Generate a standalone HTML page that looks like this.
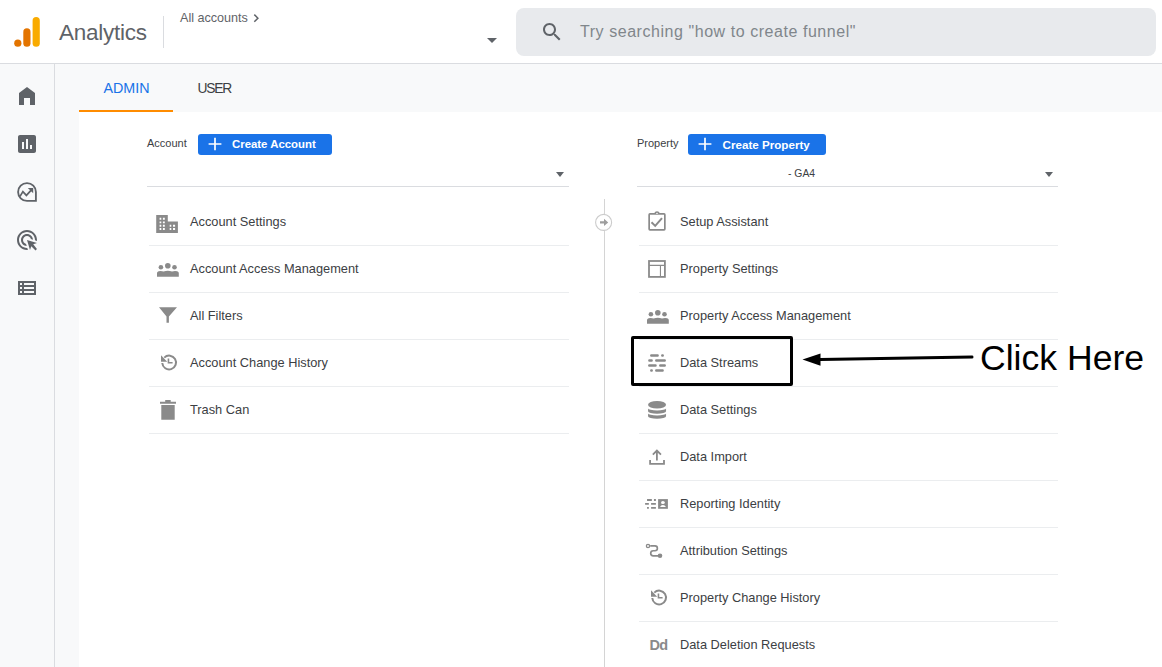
<!DOCTYPE html>
<html><head><meta charset="utf-8">
<style>
html,body{margin:0;padding:0;width:1162px;height:667px;overflow:hidden;background:#fff;font-family:"Liberation Sans",sans-serif;}
.a{position:absolute;}
.t{position:absolute;white-space:nowrap;line-height:1;}
#header{position:absolute;left:0;top:0;width:1162px;height:63px;background:#fff;border-bottom:1px solid #dadce0;}
#side{position:absolute;left:0;top:64px;width:54px;height:603px;background:#f8f9fa;border-right:1px solid #dadce0;}
#main{position:absolute;left:55px;top:64px;width:1107px;height:603px;background:#f8f9fa;}
#content{position:absolute;left:79px;top:112px;width:1083px;height:555px;background:#fff;}
.ico{position:absolute;width:24px;height:24px;}
.gl{fill:#5f6368;}
.li{position:absolute;height:1px;background:#ebedef;}
.txt{position:absolute;white-space:nowrap;line-height:1;font-size:12.8px;color:#3c4043;}
.btn{position:absolute;height:21px;background:#1a73e8;border-radius:3px;}
.btxt{position:absolute;white-space:nowrap;line-height:1;font-size:11.4px;font-weight:700;color:#fff;}
.lab{position:absolute;white-space:nowrap;line-height:1;font-size:11px;color:#3c4043;}
.gi{fill:#8c8c8c;}
</style></head>
<body>
<div id="header">
  <!-- logo -->
  <svg class="a" style="left:0;top:0" width="50" height="60" viewBox="0 0 50 60">
    <circle cx="17.8" cy="43.2" r="3.6" fill="#e37400"/>
    <rect x="23.3" y="28.3" width="7.2" height="18.5" rx="3.6" fill="#e37400"/>
    <rect x="32.6" y="17.1" width="7.2" height="29.7" rx="3.6" fill="#f9ab00"/>
  </svg>
  <div class="t" style="left:59px;top:21.5px;font-size:22.5px;letter-spacing:-0.25px;color:#5f6368;">Analytics</div>
  <div class="a" style="left:163px;top:16px;width:1px;height:32px;background:#dadce0;"></div>
  <div class="t" style="left:180px;top:12px;font-size:12.6px;color:#5f6368;">All accounts</div>
  <svg class="a" style="left:250px;top:10px" width="12" height="14" viewBox="0 0 12 14"><path d="M4.3 4.6 L7.9 8.2 L4.3 11.8" stroke="#5f6368" stroke-width="1.5" fill="none"/></svg>
  <svg class="a" style="left:487px;top:38px" width="10" height="5" viewBox="0 0 10 5"><path d="M0 0H10L5 5z" fill="#5f6368"/></svg>
  <div class="a" style="left:516px;top:8px;width:640px;height:48px;background:#e8eaed;border-radius:8px;"></div>
  <svg class="ico" style="left:540px;top:20px" viewBox="0 0 24 24"><path class="gl" d="M15.5 14h-.79l-.28-.27C15.41 12.59 16 11.11 16 9.5 16 5.91 13.09 3 9.5 3S3 5.91 3 9.5 5.91 16 9.5 16c1.61 0 3.09-.59 4.23-1.57l.27.28v.79l5 4.99L20.49 19l-4.99-5zm-6 0C7.01 14 5 11.99 5 9.5S7.01 5 9.5 5 14 7.01 14 9.5 11.99 14 9.5 14z"/></svg>
  <div class="t" style="left:580px;top:24px;font-size:16px;letter-spacing:0.55px;color:#80868b;">Try searching "how to create funnel"</div>
</div>

<div id="side">
  <svg class="ico" style="left:15px;top:20px" viewBox="0 0 24 24"><path class="gl" d="M12 3L4 9v12h5v-7h6v7h5V9z"/></svg>
  <svg class="ico" style="left:15px;top:68px" viewBox="0 0 24 24"><path class="gl" d="M19 3H5c-1.1 0-2 .9-2 2v14c0 1.1.9 2 2 2h14c1.1 0 2-.9 2-2V5c0-1.1-.9-2-2-2zM9 17H7v-7h2v7zm4 0h-2V7h2v10zm4 0h-2v-4h2v4z"/></svg>
  <svg class="ico" style="left:15px;top:116px" viewBox="0 0 24 24"><path d="M12 3.1A8.9 8.9 0 1 0 12 20.9H20.9V12A8.9 8.9 0 0 0 12 3.1z" fill="none" stroke="#5f6368" stroke-width="1.85"/><path d="M5 16.4L7.9 11.6L11.4 15.4L16.2 10.2" fill="none" stroke="#5f6368" stroke-width="1.7" stroke-linejoin="miter"/><path class="gl" d="M12.8 8H18.2V13.2z"/></svg>
  <svg class="ico" style="left:15px;top:164px" viewBox="0 0 24 24"><path class="gl" d="M11.71,17.99C8.53,17.84,6,15.22,6,12c0-3.31,2.69-6,6-6c3.22,0,5.84,2.53,5.99,5.71l-2.1-0.63C15.48,9.31,13.89,8,12,8c-2.21,0-4,1.790-4,4c0,1.89,1.31,3.48,3.08,3.89L11.71,17.99z M22,12c0,0.3-0.01,0.6-0.04,0.9l-1.970-0.59C20,12.21,20,12.1,20,12c0-4.42-3.58-8-8-8s-8,3.58-8,8s3.58,8,8,8c0.1,0,0.21,0,0.31-0.01l0.59,1.97C12.6,21.99,12.3,22,12,22C6.48,22,2,17.52,2,12C2,6.48,6.48,2,12,2S22,6.48,22,12z M18.23,16.26L22,15l-10-3l3,10l1.26-3.77l4.27,4.27l1.41-1.41L18.23,16.26z"/></svg>
  <svg class="ico" style="left:15px;top:212px" viewBox="0 0 24 24"><path class="gl" fill-rule="evenodd" d="M3 5h18v14H3z M5 7h2v2H5z M9 7h10v2H9z M5 11h2v2H5z M9 11h10v2H9z M5 15h2v2H5z M9 15h10v2H9z"/></svg>
</div>

<div id="main">
  <div class="t" style="left:48.5px;top:17px;font-size:14.3px;color:#1a73e8;">ADMIN</div>
  <div class="t" style="left:142.5px;top:18px;font-size:13.8px;letter-spacing:-1.2px;color:#3c4043;">USER</div>
  <div class="a" style="left:24px;top:46px;width:94px;height:2px;background:#ff8c00;"></div>
</div>
<div id="content"></div>
<div id="acc">
  <div class="lab" style="left:147px;top:138px;">Account</div>
  <div class="btn" style="left:198px;top:134px;width:134px;"></div>
  <svg class="a" style="left:208px;top:137px" width="14" height="14" viewBox="0 0 14 14"><path d="M7 0.8V13.2M0.6 7H13.4" stroke="#fff" stroke-width="1.7"/></svg>
  <div class="btxt" style="left:232px;top:139px;">Create Account</div>
  <svg class="a" style="left:556px;top:172px" width="8" height="5" viewBox="0 0 8 5"><path d="M0 0H8L4 5z" fill="#5f6368"/></svg>
  <div class="li" style="left:147px;top:186px;width:422px;background:#dadce0;"></div>
  <div class="li" style="left:149px;top:245px;width:420px;"></div>
  <div class="li" style="left:149px;top:292px;width:420px;"></div>
  <div class="li" style="left:149px;top:339px;width:420px;"></div>
  <div class="li" style="left:149px;top:386px;width:420px;"></div>
  <div class="li" style="left:149px;top:433px;width:420px;"></div>
  <div class="txt" style="left:190px;top:216px;">Account Settings</div>
  <div class="txt" style="left:190px;top:263px;">Account Access Management</div>
  <div class="txt" style="left:190px;top:310px;">All Filters</div>
  <div class="txt" style="left:190px;top:357px;">Account Change History</div>
  <div class="txt" style="left:190px;top:404px;">Trash Can</div>
</div>
<div id="prop">
  <div class="lab" style="left:637px;top:138px;">Property</div>
  <div class="btn" style="left:688px;top:134px;width:138px;"></div>
  <svg class="a" style="left:698px;top:137px" width="14" height="14" viewBox="0 0 14 14"><path d="M7 0.8V13.2M0.6 7H13.4" stroke="#fff" stroke-width="1.7"/></svg>
  <div class="btxt" style="left:722.5px;top:139px;font-size:11.65px;">Create Property</div>
  <div class="lab" style="left:788px;top:169px;font-size:10.4px;">- GA4</div>
  <svg class="a" style="left:1045px;top:172px" width="8" height="5" viewBox="0 0 8 5"><path d="M0 0H8L4 5z" fill="#5f6368"/></svg>
  <div class="li" style="left:637px;top:186px;width:421px;background:#dadce0;"></div>
  <div class="a" style="left:604px;top:199px;width:1px;height:468px;background:#d4d4d4;"></div>
  <div class="li" style="left:639px;top:245px;width:419px;"></div>
  <div class="li" style="left:639px;top:292px;width:419px;"></div>
  <div class="li" style="left:639px;top:339px;width:419px;"></div>
  <div class="li" style="left:639px;top:386px;width:419px;"></div>
  <div class="li" style="left:639px;top:433px;width:419px;"></div>
  <div class="li" style="left:639px;top:480px;width:419px;"></div>
  <div class="li" style="left:639px;top:527px;width:419px;"></div>
  <div class="li" style="left:639px;top:574px;width:419px;"></div>
  <div class="li" style="left:639px;top:621px;width:419px;"></div>
  <div class="txt" style="left:680px;top:216px;">Setup Assistant</div>
  <div class="txt" style="left:680px;top:263px;">Property Settings</div>
  <div class="txt" style="left:680px;top:310px;">Property Access Management</div>
  <div class="txt" style="left:680px;top:357px;">Data Streams</div>
  <div class="txt" style="left:680px;top:404px;">Data Settings</div>
  <div class="txt" style="left:680px;top:451px;">Data Import</div>
  <div class="txt" style="left:680px;top:498px;">Reporting Identity</div>
  <div class="txt" style="left:680px;top:545px;">Attribution Settings</div>
  <div class="txt" style="left:680px;top:592px;">Property Change History</div>
  <div class="txt" style="left:680px;top:639px;">Data Deletion Requests</div>
</div>
<svg class="a" style="left:0;top:0" width="1162" height="667" viewBox="0 0 1162 667">
  <circle cx="603.6" cy="222.4" r="8" fill="#fff" stroke="#cccccc" stroke-width="1.1"/>
  <path d="M600 221.3H604V218.8L608.2 222.4L604 226V223.6H600z" fill="#9e9e9e"/>
  <g fill="#8a8a8a">
    <!-- building -->
    <path fill-rule="evenodd" d="M156.2 215.1H167.8V221.6H177.9V232.9H156.2z M159.6 217.8h1.7v2h-1.7z M162.9 217.8h1.9v2h-1.9z M159.6 221.4h1.7v1.9h-1.7z M162.9 221.4h1.9v1.9h-1.9z M159.6 224.8h1.7v1.9h-1.7z M162.9 224.8h1.9v1.9h-1.9z M159.6 228.1h1.7v1.9h-1.7z M162.9 228.1h1.9v1.9h-1.9z M169.7 224.8h1.6v1.9h-1.6z M173 224.8h2.1v1.9h-2.1z M169.7 228.1h1.6v1.9h-1.6z M173 228.1h2.1v1.9h-2.1z"/>
    <!-- people account -->
    <g>
      <circle cx="160.9" cy="267.25" r="2.3"/>
      <circle cx="167.8" cy="265.8" r="2.8"/>
      <circle cx="174.5" cy="267.25" r="2.3"/>
      <path d="M157 276.7V273Q157 271.7 158.6 271.3Q161 270.8 163.6 271.5Q167.8 269.8 172 271.5Q174.6 270.8 177.2 271.3Q178.8 271.7 178.8 273V276.7z"/>
    </g>
    <!-- filter -->
    <path d="M159 307.3H177L168.9 316.6V322.8H166.5V316.6z"/>
    <!-- trash -->
    <path d="M165.2 399.9H170.7V401.7H176V403.8H160V401.7H165.2z M161.3 405.1H174.7V419.8H161.3z"/>
    <!-- people property -->
    <g transform="translate(490 47)">
      <circle cx="160.9" cy="267.25" r="2.3"/>
      <circle cx="167.8" cy="265.8" r="2.8"/>
      <circle cx="174.5" cy="267.25" r="2.3"/>
      <path d="M157 276.7V273Q157 271.7 158.6 271.3Q161 270.8 163.6 271.5Q167.8 269.8 172 271.5Q174.6 270.8 177.2 271.3Q178.8 271.7 178.8 273V276.7z"/>
    </g>
    <!-- data streams -->
    <!-- card reporting identity -->
    <rect x="658.1" y="499.1" width="9.8" height="9.7"/>
    <ellipse cx="662.9" cy="502.55" rx="1.9" ry="1.5" fill="#fff"/>
    <path d="M660 507.1L661.2 505.6Q661.8 504.95 662.9 504.95Q664 504.95 664.6 505.6L666 507.1z" fill="#fff"/>
    <!-- dot attribution -->
    <circle cx="660" cy="555.8" r="2.3"/>
    <!-- database -->
    <ellipse cx="657.05" cy="404.8" rx="9" ry="3.8"/>
    <path d="M648.05 408.4A9 2.0 0 0 0 666.05 408.4V411.2A9 2.45 0 0 1 648.05 411.2z"/>
    <path d="M648.05 413.4A9 2.0 0 0 0 666.05 413.4V416.2A9 2.45 0 0 1 648.05 416.2z"/>
  </g>
  <g fill="none" stroke="#8a8a8a">
    <!-- account history -->
    <g>
      <path d="M162.26 363A6.9 6.9 0 1 0 164.3 357.6" stroke-width="2"/>
      <path d="M168.45 358.4V362.7H172.6" stroke-width="1.6"/>
      <path d="M161 355.2V361.8H167.2z" fill="#8a8a8a" stroke="none"/>
    </g>
    <g transform="translate(490 235)">
      <path d="M162.26 363A6.9 6.9 0 1 0 164.3 357.6" stroke-width="2"/>
      <path d="M168.45 358.4V362.7H172.6" stroke-width="1.6"/>
      <path d="M161 355.2V361.8H167.2z" fill="#8a8a8a" stroke="none"/>
    </g>
    <!-- clipboard -->
    <rect x="649.15" y="213.95" width="15.7" height="15.9" rx="0.8" stroke-width="1.7"/>
    <path d="M651.5 222.3L655.2 225.9L662 218.2" stroke-width="2"/>
    <!-- layout -->
    <rect x="649" y="261" width="15.9" height="15.9" stroke-width="1.8"/>
    <path d="M649 265.4H665M660.45 265.4V277" stroke-width="1.1"/>
    <!-- data streams -->
    <g stroke-width="2.5" stroke-linecap="round">
      <path d="M651.3 355.5H657.6M662.3 355.5H662.7"/>
      <path d="M649.4 360.5H651.6M656.3 360.5H664.7"/>
      <path d="M649.3 365.5H655.5M660.3 365.5H664.7"/>
      <path d="M651.3 370.5H651.7M656.3 370.5H662.6"/>
    </g>
    <!-- upload -->
    <path d="M656.9 450.5V460.5M652.85 454.6L656.9 450.5L660.95 454.6" stroke-width="1.8"/>
    <path d="M650.1 460V463.8H664V460" stroke-width="1.8"/>
    <!-- reporting dashes -->
    <path d="M647.05 500H651.84M653.94 500H655.89M645.1 503.95H648.85M651.09 503.95H655.89M647.05 507.95H648.85M651.09 507.95H655.89" stroke-width="1.8"/>
    <!-- attribution -->
    <circle cx="648" cy="546" r="1.6" stroke-width="1.35"/>
    <path d="M650.2 545.9H655A2.4 2.4 0 0 1 655 550.7H653.3A2.6 2.6 0 0 0 653.3 555.9H659" stroke-width="1.65"/>
  </g>
  <!-- clipboard tab -->
  <path d="M654.4 214V213Q654.8 211.3 657 211.3Q659.2 211.3 659.7 213V214z" fill="#8a8a8a"/>
  <ellipse cx="657" cy="213.3" rx="0.9" ry="0.6" fill="#fff"/>
</svg>
<div class="t" style="left:649.5px;top:638px;font-size:14.5px;font-weight:700;letter-spacing:-0.7px;color:#8a8a8a;">Dd</div>
<div id="anno">
  <div class="a" style="left:631px;top:336px;width:156px;height:44px;border:3px solid #000;border-radius:2px;"></div>
  <svg class="a" style="left:795px;top:345px" width="185" height="25" viewBox="795 345 185 25"><path d="M820 359.6L972 357" stroke="#000" stroke-width="3" stroke-linecap="round"/><path d="M802.5 359.6L820.5 353.4V365.8z" fill="#000"/></svg>
  <div class="t" style="left:980px;top:340.5px;font-size:35.6px;color:#000;">Click Here</div>
</div>

</body></html>
